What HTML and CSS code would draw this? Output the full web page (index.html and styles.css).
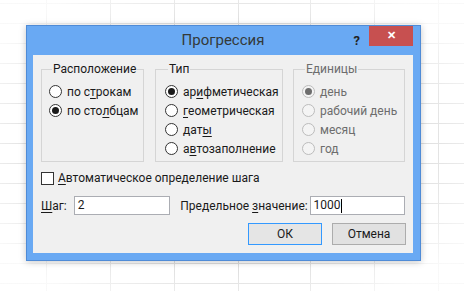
FILE: index.html
```html
<!DOCTYPE html>
<html lang="ru">
<head>
  <meta charset="UTF-8" />
  <title>Прогрессия</title>
  <link rel="stylesheet" href="styles.css">
</head>
<body>
  <div class="sheet">
    <div class="dialog">
      <div class="titlebar">
        <span></span>
        <span class="title">Прогрессия</span>
        <div class="controls">
          <span class="help">?</span>
          <span class="close">&#x2715;</span>
        </div>
      </div>

      <div class="client">
        <div class="groups">
          <fieldset class="group g-place">
            <legend>Расположение</legend>
            <div class="opt"><span class="radio"></span>по с<u>т</u>рокам</div>
            <div class="opt"><span class="radio on"></span>по сто<u>л</u>бцам</div>
          </fieldset>

          <fieldset class="group g-type">
            <legend>Тип</legend>
            <div class="opt"><span class="radio on"></span>ар<u>и</u>фметическая</div>
            <div class="opt"><span class="radio"></span><u>г</u>еометрическая</div>
            <div class="opt"><span class="radio"></span>дат<u>ы</u></div>
            <div class="opt"><span class="radio"></span>а<u>в</u>тозаполнение</div>
          </fieldset>

          <fieldset class="group g-units disabled">
            <legend>Единицы</legend>
            <div class="opt"><span class="radio on"></span>день</div>
            <div class="opt"><span class="radio"></span>рабочий день</div>
            <div class="opt"><span class="radio"></span>месяц</div>
            <div class="opt"><span class="radio"></span>год</div>
          </fieldset>
        </div>

        <div class="check-row">
          <span class="checkbox"></span><u>А</u>втоматическое определение шага
        </div>

        <div class="field-row">
          <span class="lbl lbl-step"><u>Ш</u>аг:</span>
          <span class="field f-step">2</span>
          <span class="lbl lbl-limit">Предельное <u>з</u>начение:</span>
          <span class="field f-limit">1000<i class="caret"></i></span>
        </div>

        <div class="buttons">
          <span class="btn default">ОК</span>
          <span class="btn">Отмена</span>
        </div>
      </div>
    </div>
  </div>
</body>
</html>
```

FILE: styles.css
```css
* {
  box-sizing: border-box;
  margin: 0;
  padding: 0;
}

body {
  width: 464px;
  height: 291px;
  overflow: hidden;
  font-family: Roboto, 'Noto Sans', sans-serif;
  font-size: 12px;
  color: #1a1a1a;
  background: #fff;
}

/* spreadsheet grid behind the dialog, fading to white at the edges */
.sheet {
  width: 464px;
  height: 291px;
  padding: 25px 0 0 26px;
  background:
    radial-gradient(ellipse 60% 62% at 50% 50%, rgba(255,255,255,0) 55%, rgba(255,255,255,0.85) 100%),
    linear-gradient(#d4d4d4, #d4d4d4) 46px 0 / 1px 100% no-repeat,
    linear-gradient(#d4d4d4, #d4d4d4) 110px 0 / 1px 100% no-repeat,
    linear-gradient(#d4d4d4, #d4d4d4) 174px 0 / 1px 100% no-repeat,
    linear-gradient(#d4d4d4, #d4d4d4) 238px 0 / 1px 100% no-repeat,
    linear-gradient(#d4d4d4, #d4d4d4) 310px 0 / 1px 100% no-repeat,
    linear-gradient(#d4d4d4, #d4d4d4) 374px 0 / 1px 100% no-repeat,
    linear-gradient(#d4d4d4, #d4d4d4) 438px 0 / 1px 100% no-repeat,
    repeating-linear-gradient(to bottom, transparent 0 3px, #d4d4d4 3px 4px, transparent 4px 20px);
}

.dialog {
  width: 395px;
  height: 236px;
  background: #69a9f3;
  border: 1px solid #4f8bd6;
  padding: 0 7px 7px 6px;
  box-shadow: 0 1px 7px rgba(0, 0, 0, 0.22);
  display: flex;
  flex-direction: column;
}

.titlebar {
  height: 29px;
  display: grid;
  grid-template-columns: 1fr auto 1fr;
}

.title {
  font-size: 15px;
  line-height: 29px;
  color: #343a3a;
}

.controls {
  display: flex;
  justify-content: flex-end;
  align-items: flex-start;
}

.help {
  font-weight: bold;
  font-size: 13px;
  line-height: 29px;
  color: #222;
  margin-right: 9px;
}

.close {
  width: 44px;
  height: 20px;
  background: #c75050;
  color: #fff;
  font-size: 11px;
  font-weight: bold;
  line-height: 20px;
  text-align: center;
}

.client {
  flex: 1;
  background: #f0f0f0;
  padding: 6px 8px 0 8px;
  white-space: nowrap;
}

.groups {
  display: flex;
  gap: 10px;
}

.group {
  border: 1px solid #d5d5d5;
  height: 101px;
  padding: 5px 0 0 7px;
  min-width: 0;
}

.group legend {
  margin-left: 3px;
  padding: 0 1px;
  line-height: 16px;
}

.g-place { width: 103px; margin-right: 1px; }
.g-type { width: 128px; padding-left: 9px; }
.g-units { width: 112px; padding-left: 8px; }

.opt {
  display: flex;
  align-items: center;
  height: 19px;
}

.radio {
  width: 13px;
  height: 13px;
  border: 1px solid #333;
  border-radius: 50%;
  background: #fff;
  margin-right: 5px;
  display: flex;
  align-items: center;
  justify-content: center;
  flex-shrink: 0;
}

.radio.on::after {
  content: '';
  width: 7px;
  height: 7px;
  border-radius: 50%;
  background: #1a1a1a;
}

.disabled legend,
.disabled .opt {
  color: #6d6d6d;
}

.disabled .radio {
  border-color: #bcbcbc;
  background: #f4f4f4;
}

.disabled .radio.on::after {
  background: #6d6d6d;
}

u {
  text-decoration: underline;
  text-underline-offset: 2px;
}

.check-row {
  display: flex;
  align-items: center;
  height: 16px;
  margin-top: 8px;
}

.checkbox {
  width: 13px;
  height: 13px;
  border: 1px solid #333;
  background: #fff;
  margin-right: 4px;
}

.field-row {
  display: flex;
  align-items: center;
  margin-top: 10px;
}

.lbl-step { width: 33px; }
.lbl-limit { width: 130px; margin-left: 10px; }

.field {
  height: 19px;
  border: 1px solid #abadb3;
  background: #fff;
  padding-left: 3px;
  line-height: 17px;
  display: flex;
  align-items: center;
}

.f-step { width: 97px; }
.f-limit { width: 96px; }

.caret {
  width: 1px;
  height: 14px;
  background: #000;
}

.buttons {
  display: flex;
  justify-content: flex-end;
  gap: 10px;
  margin-top: 8px;
  margin-right: -1px;
}

.btn {
  width: 74px;
  height: 22px;
  border: 1px solid #acacac;
  background: #e1e1e1;
  display: flex;
  align-items: center;
  justify-content: center;
}

.btn.default {
  border-color: #3399ff;
  background: #e5e5e5;
}
```
